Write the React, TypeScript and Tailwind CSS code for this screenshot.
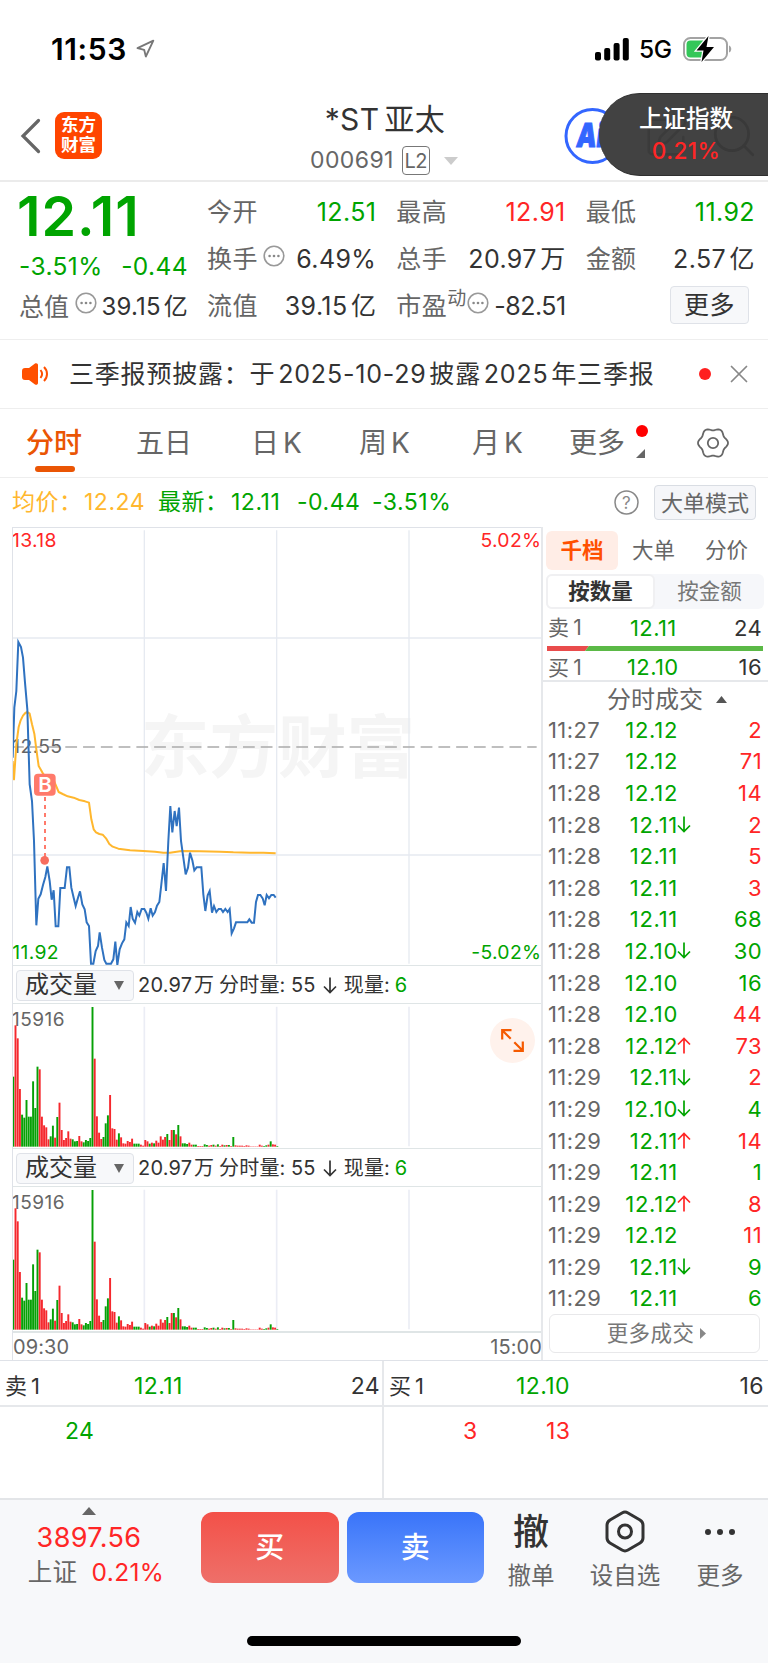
import React from 'react';
import { Navigation, Search, SquarePen, X } from 'lucide-react';

const trades = [
  { time: '11:27', price: '12.12', dir: '', qty: 2, up: true },
  { time: '11:27', price: '12.12', dir: '', qty: 71, up: true },
  { time: '11:28', price: '12.12', dir: '', qty: 14, up: true },
  { time: '11:28', price: '12.11', dir: 'down', qty: 2, up: true },
  { time: '11:28', price: '12.11', dir: '', qty: 5, up: true },
  { time: '11:28', price: '12.11', dir: '', qty: 3, up: true },
  { time: '11:28', price: '12.11', dir: '', qty: 68, up: false },
  { time: '11:28', price: '12.10', dir: 'down', qty: 30, up: false },
  { time: '11:28', price: '12.10', dir: '', qty: 16, up: false },
  { time: '11:28', price: '12.10', dir: '', qty: 44, up: true },
  { time: '11:28', price: '12.12', dir: 'up', qty: 73, up: true },
  { time: '11:29', price: '12.11', dir: 'down', qty: 2, up: true },
  { time: '11:29', price: '12.10', dir: 'down', qty: 4, up: false },
  { time: '11:29', price: '12.11', dir: 'up', qty: 14, up: true },
  { time: '11:29', price: '12.11', dir: '', qty: 1, up: false },
  { time: '11:29', price: '12.12', dir: 'up', qty: 8, up: true },
  { time: '11:29', price: '12.12', dir: '', qty: 11, up: true },
  { time: '11:29', price: '12.11', dir: 'down', qty: 9, up: false },
  { time: '11:29', price: '12.11', dir: '', qty: 6, up: false },
];

// One entry per minute: r = up, g = down, followed by the bar height
const volumes =
  'g210 r364 r325 r173 g96 g87 g140 g90 g90 g196 g116 g240 r232 r90 r64 r58 r22 g31 g63 r27 g89 r132 r50 r20 r26 r46 r24 g22 g16 g17 r32 r16 g13 g20 g17 g26 g419 r264 r91 r42 r23 g29 g70 g94 r155 r55 r53 r21 g40 r28 r10 r9 r17 r14 r24 g9 g9 g9 r6 r3 r20 r16 g9 r12 g10 r18 r12 r31 r21 r29 g38 r20 r50 g50 r37 g65 r31 g10 g10 g8 r12 r6 g6 g6 r2 r2 r2 g7 g5 r3 r5 g6 r3 g7 r2 r6 g4 r5 g5 r2 g29 r4 r3 r3 r3 r2 r4 r3 r1 r1 r1 r1 r6 r3 g2 g4 r6 g16 r7 r6 g2'.split(' ');

const pricePoints =
  '38,440 43,290 49,240 55,93 63,108 69,140 75,215 82,295 89,520 96,570 102,690 109,943 115,863 122,850 129,822 136,798 142,766 149,810 155,866 161,838 167,946 175,946 181,831 194,831 201,769 208,769 214,830 221,860 227,885 234,860 240,841 247,880 254,895 260,934 267,945 273,1058 280,1058 287,1020 294,1005 299,964 306,1010 313,1047 319,1058 333,1058 340,1045 346,992 352,1062 359,1015 366,997 373,985 379,934 386,945 392,888 398,923 405,935 412,903 418,914 425,894 433,894 439,905 445,923 452,892 458,914 465,903 471,884 478,873 484,820 491,756 498,840 505,690 511,585 517,664 524,600 530,645 537,590 543,690 550,740 557,790 564,770 570,725 577,748 583,778 590,769 604,769 610,850 616,900 623,853 629,840 636,905 642,885 649,903 656,894 663,894 669,903 676,894 683,903 689,894 695,967 702,952 708,934 742,934 748,925 755,935 762,935 768,873 774,852 781,852 788,862 794,883 800,852 807,862 814,852 821,852 827,860';

const averagePoints =
  '38,450 42,505 49,400 56,348 62,328 69,314 76,306 82,303 89,308 96,340 103,368 109,415 116,465 123,477 130,490 150,497 162,510 176,543 188,549 203,556 221,560 238,567 255,571 267,575 274,625 281,655 288,664 298,669 308,671 318,682 328,699 338,707 355,713 390,718 430,720 465,722 490,725 510,725 545,720 600,721 660,722 700,724 750,725 790,725 827,727';

// Six soft lobes around the settings icon
const gearPoints = Array.from({ length: 90 }, (_, i) => {
  const a = (i / 90) * Math.PI * 2;
  const r = 13.8 + 1.2 * Math.cos(6 * a);
  return `${(16 + r * Math.cos(a)).toFixed(2)},${(16 + r * Math.sin(a)).toFixed(2)}`;
}).join(' ');

const MoreDots = ({ className = '' }: { className?: string }) => (
  <svg className={className} width="22" height="22" viewBox="0 0 22 22" fill="none">
    <circle cx="11" cy="11" r="9.8" stroke="#999" strokeWidth="1.6" />
    <circle cx="6.6" cy="11" r="1.3" fill="#888" />
    <circle cx="11" cy="11" r="1.3" fill="#888" />
    <circle cx="15.4" cy="11" r="1.3" fill="#888" />
  </svg>
);

const Arrow = ({ dir, className = '' }: { dir: string; className?: string }) => (
  <svg className={className} width="14" height="17" viewBox="0 0 14 17" fill="none" stroke="currentColor" strokeWidth="1.7">
    {dir === 'up' ? <path d="M7 16.5V2M1 7.5L7 1.5l6 6" /> : <path d="M7 .5V15M1 9.5l6 6 6-6" />}
  </svg>
);

const Stat = ({ label, value, tone = 'text-[#333]', extra }: { label: string; value: string; tone?: string; extra?: React.ReactNode }) => (
  <div className="flex h-[47px] items-center">
    <span className="text-[25px] text-[#666]">{label}</span>
    {extra}
    <span className={`ml-auto text-[25px] whitespace-nowrap ${tone}`}>{value}</span>
  </div>
);

const StatusBar = () => (
  <div className="flex h-[92px] items-center pt-[6px] pr-[36px] pl-[51px]">
    <span className="w-[84px] text-[30px] font-semibold tracking-[0.6px] text-black">11:53</span>
    <Navigation size={20} strokeWidth={2.2} color="#777" />
    <svg className="ml-auto" width="34" height="23" viewBox="0 0 34 23">
      <rect x="0" y="14" width="6" height="8.5" rx="2" />
      <rect x="9.2" y="10" width="6" height="12.5" rx="2" />
      <rect x="18.6" y="5" width="6" height="17.5" rx="2" />
      <rect x="27.8" y="0" width="6" height="22.5" rx="2" />
    </svg>
    <span className="ml-[10px] w-[32px] text-[24.5px] font-medium tracking-[-0.3px] text-black">5G</span>
    <svg className="ml-[12px]" width="49" height="26" viewBox="0 0 49 26">
      <rect x="1" y="2" width="43" height="22" rx="6.5" fill="none" stroke="#a3a3a3" strokeWidth="2" />
      <path d="M46 9.5c3 1 3 6 0 7z" fill="#a3a3a3" />
      <path d="M7.5 4.5H20V21.5H7.5a4 4 0 0 1-4-4V8.5a4 4 0 0 1 4-4z" fill="#34c759" />
      <path d="M25.5 0L13.5 14.5h7L18.5 26 31 11h-7.5z" fill="#000" stroke="#fff" strokeWidth="2.5" paintOrder="stroke" />
    </svg>
  </div>
);

const Header = () => (
  <div className="relative flex h-[90px] items-center border-b-2 border-[#ebebeb] pl-[20px]">
    <svg className="mb-px" width="21" height="36" viewBox="0 0 21 36" fill="none" stroke="#666" strokeWidth="3.2" strokeLinecap="round">
      <path d="M18.5 2.5L3 18l15.5 15.5" />
    </svg>
    <div className="mb-[2px] ml-[14px] flex h-[47px] w-[47px] flex-col items-center justify-center rounded-[9px] bg-[#ff4500] text-[17.5px] leading-[20px] font-bold tracking-[0px] text-white">
      <span>东方</span>
      <span>财富</span>
    </div>
    <div className="ml-[208px] flex flex-col items-center pt-[7px]">
      <span className="text-[30px] leading-[42px] whitespace-nowrap text-[#333]">*ST 亚太</span>
      <div className="mr-[2px] flex h-[42px] items-center">
        <span className="text-[23px] text-[#666]">000691</span>
        <span className="ml-[8px] flex h-[29px] w-[28px] items-center justify-center rounded-[4px] border border-[#777] text-[20px] tracking-[-0.5px] text-[#666]">L2</span>
        <svg className="ml-[14px]" width="14" height="8" viewBox="0 0 14 8"><path d="M0 0h14L7 8z" fill="#ccc" /></svg>
      </div>
    </div>
    <svg className="absolute top-[16px] left-[563px]" width="58" height="58" viewBox="0 0 58 58">
      <circle cx="29.5" cy="28" r="26.5" fill="#fff" stroke="#3366ff" strokeWidth="3" />
      <text fontSize="33" fontWeight="900" letterSpacing="0" fill="#3366ff" stroke="#3366ff" transform="translate(12.5 38.500) skewX(-7) scale(.76 1)">Ai</text>
    </svg>
    <div className="absolute top-px right-0 flex h-[83px] w-[169px] flex-col items-center justify-center rounded-l-[41px] border-y border-[#2f2f2f] bg-[#424242] pl-[5px]">
      <SquarePen className="absolute top-[20px] left-[44px]" size={46} strokeWidth={1.3} color="#3b3b3b" />
      <Search className="absolute top-[17px] left-[110px]" size={50} strokeWidth={1.3} color="#393939" />
      <span className="relative text-[23.5px] leading-[32px] font-medium tracking-[0px] text-white">上证指数</span>
      <span className="relative text-[22.5px] leading-[32px] font-medium text-[#ff2626]">0.21%</span>
    </div>
  </div>
);

const Quote = () => (
  <div className="flex h-[158px] border-b border-[#eee] pt-[7px] pl-[19px]">
    <div className="-mt-px w-[169px]">
      <div className="-ml-[2px] flex h-[54px] items-center pt-[2px] text-[55.5px] leading-none font-semibold tracking-[1px] text-[#00a400]">12.11</div>
      <div className="flex h-[48px] items-center justify-between text-[24.5px] text-[#00a400]">
        <span>-3.51%</span>
        <span>-0.44</span>
      </div>
      <div className="flex h-[34px] items-center">
        <span className="text-[25px] tracking-[0px] text-[#666]">总值</span>
        <MoreDots className="mb-[8px] ml-[6px]" />
        <span className="ml-auto text-[24px] tracking-[0.2px] whitespace-nowrap text-[#333]">39.15 亿</span>
      </div>
    </div>
    <div className="ml-[19px] grid w-[548px] grid-cols-3 content-start gap-x-[20px]">
      <Stat label="今开" value="12.51" tone="text-[#00a400]" />
      <Stat label="最高" value="12.91" tone="text-[#ff2626]" />
      <Stat label="最低" value="11.92" tone="text-[#00a400]" />
      <Stat label="换手" value="6.49%" extra={<MoreDots className="mb-[8px] ml-[5px]" />} />
      <Stat label="总手" value="20.97 万" />
      <Stat label="金额" value="2.57 亿" />
      <Stat label="流值" value="39.15 亿" />
      <Stat
        label="市盈"
        value="-82.51"
        tone="text-[#333] tracking-[-0.5px]"
        extra={
          <>
            <span className="mb-[16px] text-[19px] tracking-[0px] text-[#666]">动</span>
            <MoreDots className="mb-[8px] ml-px shrink-0" />
          </>
        }
      />
      <div className="flex h-[47px] items-center justify-end pr-[6px]">
        <div className="mb-[3px] flex h-[38px] w-[79px] items-center justify-center rounded-[4px] border border-[#dfe2e8] bg-[#f7f8fa] text-[25px] text-[#333]">更多</div>
      </div>
    </div>
  </div>
);

const News = () => (
  <div className="flex h-[69px] items-center border-b border-[#eee] pr-[14px] pl-[22px]">
    <svg width="27" height="22" viewBox="0 0 27 22" fill="none">
      <path d="M0 8a3 3 0 0 1 3-3h4l6-4.5c1.5-.8 3 0 3 1.5v18c0 1.5-1.5 2.3-3 1.5L7 17H3a3 3 0 0 1-3-3z" fill="#ff5000" />
      <path d="M18.5 7c2 2.5 2 5.5 0 8M22 4c4 4 4 10 0 14" stroke="#ff5000" strokeWidth="2" />
    </svg>
    <span className="ml-[20px] text-[25px] tracking-[0.8px] whitespace-nowrap text-[#333] [word-spacing:-5px]">三季报预披露：于 2025-10-29 披露 2025 年三季报</span>
    <span className="ml-auto h-[12px] w-[12px] rounded-full bg-[#ff2020]" />
    <X className="ml-[13px]" size={30} strokeWidth={1.4} color="#888" />
  </div>
);

const Tabs = () => (
  <div className="flex h-[69px] items-center border-b border-[#eee] pl-[26px] text-[28px] tracking-[0px] whitespace-nowrap text-[#666]">
    <div className="relative w-[110px] font-medium text-[#ea5504]">
      分时
      <span className="absolute top-[37px] left-[9px] h-[6px] w-[40px] rounded-full bg-[#ea5504]" />
    </div>
    <span className="w-[115px]">五日</span>
    <span className="w-[108px]">日 K</span>
    <span className="w-[113px]">周 K</span>
    <span className="w-[97px]">月 K</span>
    <div className="relative w-[128px]">
      更多
      <span className="absolute top-[-4px] left-[67px] h-[12px] w-[12px] rounded-full bg-[#ff0000]" />
      <svg className="absolute top-[20px] left-[67px]" width="9" height="9" viewBox="0 0 9 9"><path d="M9 0v9H0z" fill="#666" /></svg>
    </div>
    <svg width="32" height="32" viewBox="0 0 32 32" fill="none" stroke="#666" strokeWidth="1.8" strokeLinejoin="round">
      <polygon points={gearPoints} />
      <circle cx="16" cy="16" r="5.2" />
    </svg>
  </div>
);

const Legend = () => (
  <div className="flex h-[49px] items-center pr-[12px] pl-[12px] text-[23px] tracking-[0.5px] whitespace-nowrap text-[#00a400]">
    <span className="w-[72px] text-[#ffb72e]">均价：</span>
    <span className="w-[74px] text-[#ffb72e]">12.24</span>
    <span className="w-[73px]">最新：</span>
    <span className="w-[66px]">12.11</span>
    <span className="w-[75px]">-0.44</span>
    <span>-3.51%</span>
    <svg className="ml-auto" width="25" height="25" viewBox="0 0 25 25">
      <circle cx="12.5" cy="12.5" r="11.5" fill="none" stroke="#888" strokeWidth="1.5" />
      <text x="12.5" y="18.5" fontSize="17" textAnchor="middle" fill="#888">?</text>
    </svg>
    <div className="ml-[15px] flex h-[35px] w-[102px] items-center justify-center rounded-[4px] border border-[#d9dde3] bg-[#f5f6f9] text-[22px] tracking-[0px] text-[#666]">大单模式</div>
  </div>
);

const PriceChart = () => (
  <svg className="block" width="528" height="437" viewBox="39 -249 1584 1311">
    <text x="422" y="482" fontSize="206" fontWeight="700" letterSpacing="0" fill="#f5f5f5">东方财富</text>
    <g stroke="#e6eaf1" strokeWidth="4">
      <path d="M433 -242V1058M830 -242V1058M1227 -242V1058M36 81H1623M36 732H1623" />
    </g>
    <path d="M36 408H1610" stroke="#aaa" strokeWidth="5" strokeDasharray="35.3 18" />
    <g fontSize="58" letterSpacing="1">
      <text x="36" y="-192" fill="#ff2626">13.18</text>
      <text x="1624" y="-192" textAnchor="end" fill="#ff2626">5.02%</text>
      <text x="37" y="425" fill="#666">12.55</text>
      <text x="37" y="1043" fill="#00a400">11.92</text>
      <text x="1624" y="1043" textAnchor="end" fill="#00a400">-5.02%</text>
    </g>
    <polyline points={averagePoints} fill="none" stroke="#ffb72e" strokeWidth="6" strokeLinejoin="round" />
    <polyline points={pricePoints} fill="none" stroke="#2f72c0" strokeWidth="6" />
    <path d="M135 558V740" stroke="#ff7a6b" strokeWidth="6" strokeDasharray="12 12" />
    <circle cx="134" cy="748" r="13" fill="#f76d5e" />
    <rect x="102" y="488" width="65" height="66" rx="12" fill="#ff7a6b" />
    <text x="135" y="543" fontSize="62" fontWeight="600" textAnchor="middle" letterSpacing="0" fill="#fff">B</text>
  </svg>
);

const VolumePanel = () => (
  <div>
    <div className="flex h-[39px] items-center border-y border-[#dfe5e6] pt-px pl-[3px] text-[20px] tracking-[0.2px] whitespace-nowrap text-[#333]">
      <div className="flex h-[31px] w-[118px] items-center rounded-[4px] border border-[#dfe2e8] bg-[#f7f8fa] pl-[8px] text-[24px] tracking-[0px]">
        成交量
        <svg className="ml-[17px]" width="10" height="9" viewBox="0 0 10 9"><path d="M0 0h10L5 9z" fill="#666" /></svg>
      </div>
      <span className="ml-[4px] w-[81px]">20.97 万</span>
      <span className="w-[72px]">分时量:</span>
      <span>55</span>
      <Arrow className="mx-[7px]" dir="down" />
      <span className="w-[51px]">现量:</span>
      <span className="text-[#00a400]">6</span>
    </div>
    <svg className="block" width="528" height="144" viewBox="39 130 1584 432">
      <path d="M433 138V557M830 138V557M1227 138V557" stroke="#ebedf5" strokeWidth="5" />
      <text x="36" y="195" fontSize="57" letterSpacing="1.5" fill="#666">15916</text>
      {volumes.map((v, i) => (
        <rect
          key={i}
          x={37 + i * 6.6}
          y={558 - Number(v.slice(1))}
          width="5.8"
          height={v.slice(1)}
          fill={v[0] === 'r' ? '#f5282d' : '#06a006'}
        />
      ))}
    </svg>
  </div>
);

const SidePanel = () => (
  <div className="w-[227px] border-l-2 border-[#e6e8eb] text-[22px]">
    <div className="flex h-[47px] items-center pl-[3px] text-[21.5px] tracking-[0px] text-[#666]">
      <span className="mr-[14px] flex h-[39px] w-[72px] items-center justify-center rounded-[6px] bg-[#ffede6] font-semibold text-[#ff5000]">千档</span>
      <span className="w-[73px]">大单</span>
      <span>分价</span>
    </div>
    <div className="mx-[3px] flex h-[35px] w-[218px] rounded-[6px] bg-[#f6f7fa] text-[21.5px] tracking-[0px]">
      <span className="flex w-[109px] items-center justify-center rounded-[6px] border-2 border-[#f0f0f2] bg-white font-semibold text-[#333]">按数量</span>
      <span className="flex w-[109px] items-center justify-center text-[#777]">按金额</span>
    </div>
    <div className="flex h-[37px] items-center pr-[6px] pl-[5px]">
      <span className="w-[82px] text-[21px] text-[#666] [word-spacing:-2.5px]">卖 1</span>
      <span className="text-[#00a400]">12.11</span>
      <span className="ml-auto text-[#333]">24</span>
    </div>
    <svg className="ml-[4px] block" width="216" height="5" viewBox="0 0 216 5">
      <path d="M0 0h42l-4 5H0z" fill="#e94c4c" />
      <path d="M42 0h174v5H38z" fill="#5bb946" />
    </svg>
    <div className="flex h-[31px] items-center border-b-2 border-[#e6e8eb] pt-[3px] pr-[6px] pl-[5px]">
      <span className="w-[79px] text-[21px] text-[#666] [word-spacing:-2.5px]">买 1</span>
      <span className="text-[#00a400]">12.10</span>
      <span className="ml-auto text-[#333]">16</span>
    </div>
    <div className="flex h-[32px] items-center pt-[3px] pl-[64px] text-[24px] tracking-[0px] text-[#666]">
      分时成交
      <svg className="ml-[13px]" width="11" height="7" viewBox="0 0 11 7"><path d="M0 7h11L5.5 0z" fill="#555" /></svg>
    </div>
    {trades.map((t, i) => (
      <div key={i} className="flex h-[31.6px] items-center pr-[6px] pl-[5px]">
        <span className="w-[60px] text-[#666]">{t.time}</span>
        <span className="w-[70px] text-right tracking-[0.7px] text-[#00a400]">{t.price}</span>
        {t.dir && <Arrow dir={t.dir} className={t.dir === 'up' ? '-ml-px text-[#ff2626]' : '-ml-px text-[#00a400]'} />}
        <span className={`ml-auto ${t.up ? 'text-[#ff2626]' : 'text-[#00a400]'}`}>{t.qty}</span>
      </div>
    ))}
    <div className="ml-[6px] flex h-[39px] w-[211px] items-center justify-center rounded-[6px] border border-[#e8e8ea] pl-[4px] text-[21.5px] text-[#777]">
      更多成交
      <svg className="ml-[6px]" width="6" height="11" viewBox="0 0 6 11"><path d="M0 0v11l6-5.5z" fill="#888" /></svg>
    </div>
  </div>
);

const Depth = () => (
  <div className="grid h-[138px] grid-cols-2 border-t border-[#dfe2e8] text-[23px] text-[#333]">
    <div className="border-r-2 border-[#e6e8eb]">
      <div className="flex h-[46px] items-center border-b-2 border-[#e6e8eb] pt-[6px] pr-[2px] pl-[5px]">
        <span className="w-[129px] text-[22px] [word-spacing:-3px]">卖 1</span>
        <span className="text-[#00a400]">12.11</span>
        <span className="ml-auto">24</span>
      </div>
      <div className="flex h-[48px] items-center pl-[65px] text-[#00a400]">24</div>
    </div>
    <div>
      <div className="flex h-[46px] items-center border-b-2 border-[#e6e8eb] pt-[6px] pr-[4px] pl-[5px]">
        <span className="w-[127px] text-[22px] [word-spacing:-3px]">买 1</span>
        <span className="text-[#00a400]">12.10</span>
        <span className="ml-auto">16</span>
      </div>
      <div className="flex h-[48px] items-center pl-[79px] text-[#ff2626]">
        <span className="w-[83px]">3</span>
        <span>13</span>
      </div>
    </div>
  </div>
);

const BottomBar = () => (
  <div className="h-[165px] border-t-2 border-[#e3e5e8] bg-[#f7f8fa]">
    <div className="flex h-[128px] pt-[7px]">
      <div className="flex w-[180px] flex-col items-center text-[#ff2626]">
        <svg className="mr-[2px]" width="14" height="8" viewBox="0 0 14 8"><path d="M0 8h14L7 0z" fill="#666" /></svg>
        <span className="mt-[4px] mr-[2px] text-[27px] leading-[37px]">3897.56</span>
        <div className="flex gap-[14px] pl-[12px] text-[24.5px] leading-[32px]">
          <span className="text-[#666]">上证</span>
          <span>0.21%</span>
        </div>
      </div>
      <div className="mt-[5px] ml-[21px] flex h-[71px] w-[138px] items-center justify-center rounded-[12px] bg-linear-to-b from-[#f35048] to-[#ee6f69] text-[29px] font-medium text-white">买</div>
      <div className="mt-[5px] ml-[8px] flex h-[71px] w-[137px] items-center justify-center rounded-[12px] bg-linear-to-b from-[#3974f9] to-[#6b99ff] text-[29px] font-medium text-white">卖</div>
      <div className="ml-[18px] flex w-[58px] flex-col items-center tracking-[0px] whitespace-nowrap">
        <span className="mt-[2px] text-[36px] leading-[46px] font-medium text-[#333]">撤</span>
        <span className="mt-px text-[23.5px] leading-[40px] text-[#666]">撤单</span>
      </div>
      <div className="ml-[25px] flex w-[80px] flex-col items-center tracking-[0px] whitespace-nowrap">
        <svg className="mt-[3px]" width="40" height="43" viewBox="0 0 40 43" fill="none" stroke="#333" strokeWidth="3">
          <path d="M17 3q3-1.8 6 0l12 7q3 2 3 5v13q0 3-3 5l-12 7q-3 1.8-6 0l-12-7q-3-2-3-5V15q0-3 3-5z" />
          <circle cx="20" cy="21.5" r="6.5" />
        </svg>
        <span className="mt-[3px] text-[23.5px] leading-[40px] text-[#666]">设自选</span>
      </div>
      <div className="ml-[24px] flex w-[62px] flex-col items-center tracking-[0px] whitespace-nowrap">
        <svg className="mt-[21px]" width="32" height="8" viewBox="0 0 32 8" fill="#333">
          <circle cx="4" cy="4" r="3" />
          <circle cx="16" cy="4" r="3" />
          <circle cx="28" cy="4" r="3" />
        </svg>
        <span className="mt-[20px] text-[23.5px] leading-[40px] text-[#666]">更多</span>
      </div>
    </div>
    <div className="mx-auto mt-[8px] h-[10px] w-[274px] rounded-full bg-black" />
  </div>
);

const App: React.FC = () => (
  <div className="h-[1663px] w-[768px] overflow-hidden bg-white font-['Inter','Noto_Sans_CJK_SC',sans-serif] leading-none tracking-[0.4px] [word-spacing:-4px]">
    <StatusBar />
    <Header />
    <Quote />
    <News />
    <Tabs />
    <Legend />
    <div className="flex h-[833px]">
      <div className="ml-[12px] w-[529px] border-t border-l border-[#dfe2e8]">
        <PriceChart />
        <div className="relative">
          <VolumePanel />
          <div className="absolute top-[53px] left-[477px] flex h-[45px] w-[45px] items-center justify-center rounded-full bg-[#fff2ec]">
            <svg width="23" height="23" viewBox="0 0 23 23" fill="none" stroke="#f55a00" strokeWidth="2.2">
              <path d="M10.5 1.2H1.2v9.3M1.2 1.2l8.5 8.5M12.5 21.8h9.3v-9.3M21.8 21.8l-8.5-8.5" />
            </svg>
          </div>
        </div>
        <VolumePanel />
        <div className="-mr-px flex h-[29px] items-center justify-between border-t-2 border-[#dfe5e6] text-[20px] tracking-[0.1px] text-[#666]">
          <span>09:30</span>
          <span>15:00</span>
        </div>
      </div>
      <SidePanel />
    </div>
    <Depth />
    <BottomBar />
  </div>
);

export default App;
